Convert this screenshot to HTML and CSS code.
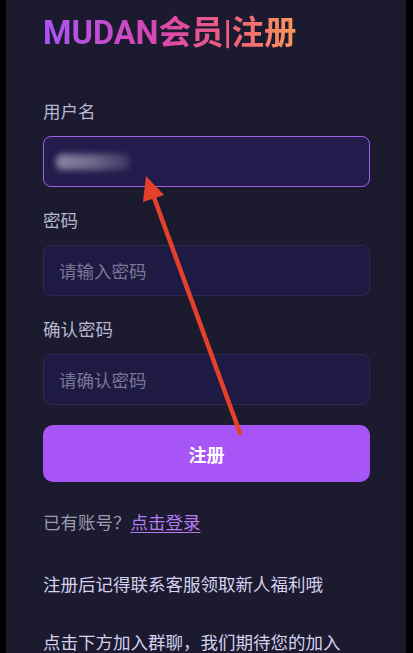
FILE: index.html
```html
<!DOCTYPE html>
<html lang="zh-CN">
<head>
    <meta charset="UTF-8">
    <meta name="viewport" content="width=device-width, initial-scale=1.0">
    <title>MUDAN会员|注册</title>
    <link rel="stylesheet" href="styles.css">
</head>
<body>

<div class="page">
    <h1 class="title">MUDAN会员|注册</h1>

    <form class="reg-form">
        <label class="field-label">用户名</label>
        <div class="field field-focus">
            <span class="blurred"></span>
        </div>

        <label class="field-label">密码</label>
        <div class="field">
            <span class="placeholder">请输入密码</span>
        </div>

        <label class="field-label">确认密码</label>
        <div class="field">
            <span class="placeholder">请确认密码</span>
        </div>

        <button type="button" class="submit-btn">注册</button>
    </form>

    <p class="login-tip">已有账号？<a href="#" class="login-link">点击登录</a></p>
    <p class="note note-first">注册后记得联系客服领取新人福利哦</p>
    <p class="note">点击下方加入群聊，我们期待您的加入</p>

    <svg class="arrow" width="413" height="653" viewBox="0 0 413 653">
        <line x1="240" y1="433" x2="152" y2="192" stroke="#e5402b" stroke-width="4.5" stroke-linecap="round"/>
        <polygon points="146,176 164,195 143,202" fill="#e5402b"/>
    </svg>
</div>

</body>
</html>
```

FILE: styles.css
```css
body {
    margin: 0;
    background-color: #000;
    font-family: "Noto Sans", "Noto Sans CJK SC", sans-serif;
}
.page {
    position: relative;
    margin: 0 7px 0 6px;
    min-height: 653px;
    background-color: #1b1a2e;
    padding: 13px 36px 0 37px;
    box-sizing: border-box;
    overflow: hidden;
}
.title {
    margin: 0;
    font-family: Roboto, "Noto Sans CJK SC", sans-serif;
    font-size: 32.5px;
    line-height: 40px;
    font-weight: bold;
    display: inline-block;
    background: linear-gradient(90deg, #a855f7 0%, #d946b0 45%, #f0607a 75%, #fb9a5a 100%);
    -webkit-background-clip: text;
    background-clip: text;
    color: transparent;
}
.reg-form {
    margin-top: 46px;
    display: flex;
    flex-direction: column;
}
.field-label {
    display: block;
    font-size: 17.5px;
    line-height: 24px;
    color: #b9b7d2;
    margin-bottom: 13px;
}
.field {
    height: 51px;
    box-sizing: border-box;
    border: 1px solid #2d2a52;
    border-radius: 8px;
    background-color: #1f1a44;
    display: flex;
    align-items: center;
    padding: 0 15px;
    margin-bottom: 21px;
}
.field-focus {
    border-color: #a062e6;
    background-color: #221b4b;
    padding-left: 12px;
}
.placeholder {
    font-size: 17.5px;
    color: #7a7796;
}
.blurred {
    display: block;
    width: 74px;
    height: 16px;
    border-radius: 6px;
    background: linear-gradient(90deg, #8a86a2 0%, #6e6a8c 50%, #3a3462 100%);
    filter: blur(3px);
}
.submit-btn {
    margin-top: -1px;
    height: 57px;
    border: none;
    border-radius: 10px;
    background-color: #a855f7;
    color: #fff;
    font-family: inherit;
    font-size: 18px;
    font-weight: bold;
    cursor: pointer;
}
.login-tip {
    margin: 28px 0 0;
    font-size: 17.5px;
    line-height: 24px;
    color: #9c9ab2;
}
.login-link {
    color: #b57cf2;
    text-decoration: underline;
    text-underline-offset: 3px;
}
.note {
    margin: 34px 0 0;
    font-size: 17.5px;
    line-height: 24px;
    color: #d6d0ee;
}
.note-first {
    margin-top: 38px;
}
.arrow {
    position: absolute;
    left: -6px;
    top: 0;
    pointer-events: none;
}
```
